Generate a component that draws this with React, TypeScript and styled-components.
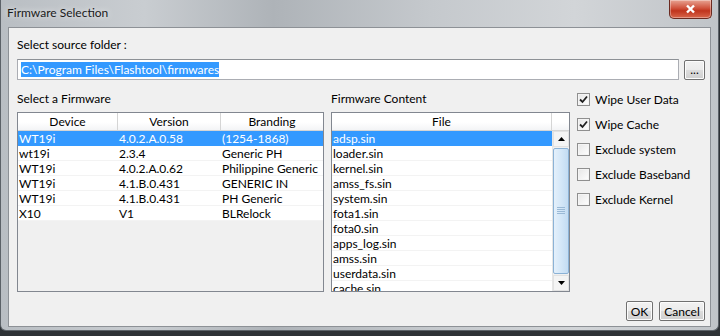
import React from 'react'
import styled, { createGlobalStyle } from 'styled-components'

const GlobalStyle = createGlobalStyle`
  html, body {
    margin: 0;
    padding: 0;
    background: #2e3236;
  }
  * {
    box-sizing: border-box;
  }
`

const Window = styled.div`
  width: 719px;
  height: 331px;
  display: flex;
  flex-flow: column nowrap;
  padding: 0 7px 3px 7px;
  border: 1px solid #5c6268;
  border-top: none;
  border-radius: 0 0 6px 6px;
  background: linear-gradient(90deg, #b9bec3 0%, #c9cdd1 20%, #aeb3b8 38%, #c5c9cd 60%, #d2d5d8 80%, #c0c4c8 100%);
  font-family: Lato, 'Noto Sans', sans-serif;
  font-size: 12px;
  color: #000;
`

const TitleBar = styled.div`
  height: 27px;
  display: flex;
  flex-flow: row nowrap;
  align-items: flex-start;
  justify-content: space-between;
`

const TitleText = styled.span`
  margin-top: 5px;
  margin-left: -1px;
  font-size: 12px;
  color: #1a1a1a;
  text-shadow: 0 0 6px rgba(255, 255, 255, 0.9);
`

const CloseButton = styled.div`
  width: 43px;
  height: 19px;
  margin-right: -1px;
  display: flex;
  align-items: center;
  justify-content: center;
  border: 1px solid #6b2a20;
  border-top: none;
  border-radius: 0 0 5px 5px;
  background: linear-gradient(180deg, #e8a493 0%, #d0533d 45%, #c0341d 60%, #d8664a 100%);
  box-shadow: inset 0 0 0 1px rgba(255, 255, 255, 0.35);
`

const Client = styled.div`
  flex: 1;
  display: flex;
  flex-flow: column nowrap;
  background: #f0f0f0;
  border: 1px solid #8d9196;
  padding: 9px 5px 4px 8px;
`

const Label = styled.div`
  height: 16px;
  line-height: 16px;
`

const PathRow = styled.div`
  display: flex;
  flex-flow: row nowrap;
  align-items: center;
  margin-top: 6px;
  gap: 5px;
`

const PathInput = styled.div`
  flex: 1;
  height: 21px;
  display: flex;
  align-items: center;
  padding-left: 3px;
  background: #fff;
  border: 1px solid #abadb3;
  border-top-color: #8d9196;
`

const Highlight = styled.span`
  background: #3399ff;
  color: #fff;
  line-height: 15px;
`

const Button = styled.div<{ $w: number }>`
  width: ${(p) => p.$w}px;
  height: 20px;
  display: flex;
  align-items: center;
  justify-content: center;
  border: 1px solid #707070;
  border-radius: 2px;
  background: linear-gradient(180deg, #f2f2f2 0%, #ebebeb 49%, #dddddd 50%, #cfcfcf 100%);
  box-shadow: inset 0 0 0 1px #fcfcfc;
`

const Sections = styled.div`
  display: flex;
  flex-flow: row nowrap;
  margin-top: 11px;
`

const Column = styled.div<{ $w: number; $gap?: number }>`
  width: ${(p) => p.$w}px;
  margin-right: ${(p) => p.$gap || 0}px;
  display: flex;
  flex-flow: column nowrap;
`

const Grid = styled.div`
  margin-top: 5px;
  height: 180px;
  border: 1px solid #828790;
  background: #f0f0f0;
  overflow: hidden;
  display: flex;
  flex-flow: column nowrap;
`

const HeaderRow = styled.div`
  display: flex;
  flex-flow: row nowrap;
  height: 18px;
  background: linear-gradient(180deg, #ffffff 0%, #ffffff 55%, #f3f4f6 100%);
  border-bottom: 1px solid #d5d5d5;
`

const HeaderCell = styled.div<{ $w?: number }>`
  ${(p) => (p.$w ? `width: ${p.$w}px;` : 'flex: 1;')}
  text-align: center;
  line-height: 17px;
  border-right: 1px solid #d5d5d5;
  &:last-child {
    border-right: none;
  }
`

const Row = styled.div<{ $selected?: boolean }>`
  display: flex;
  flex-flow: row nowrap;
  height: 15px;
  line-height: 15px;
  background: ${(p) => (p.$selected ? '#3399ff' : '#fff')};
  color: ${(p) => (p.$selected ? '#fff' : '#000')};
  box-shadow: inset 0 -1px 0 ${(p) => (p.$selected ? '#3399ff' : '#f3f3f3')};
`

const Cell = styled.div<{ $w?: number }>`
  ${(p) => (p.$w ? `width: ${p.$w}px;` : 'flex: 1;')}
  padding-left: 1px;
  white-space: nowrap;
`

const ListBody = styled.div`
  flex: 1;
  display: flex;
  flex-flow: row nowrap;
  overflow: hidden;
`

const ListRows = styled.div`
  flex: 1;
  background: #fff;
  overflow: hidden;
`

const ScrollBar = styled.div`
  width: 17px;
  display: flex;
  flex-flow: column nowrap;
  background: #f0f0f0;
  border-left: 1px solid #e6e6e6;
`

const ScrollArrow = styled.div`
  height: 16px;
  display: flex;
  align-items: center;
  justify-content: center;
  background: #f4f4f4;
  border: 1px solid #e2e2e2;
`

const Thumb = styled.div`
  flex: 1;
  margin: 1px 0;
  display: flex;
  align-items: center;
  justify-content: center;
  border: 1px solid #8bb2d6;
  border-radius: 2px;
  background: linear-gradient(90deg, #e4f0fb 0%, #d4e7f8 50%, #c3dcf3 100%);
`

const Grip = styled.div`
  width: 8px;
  height: 8px;
  background-image: repeating-linear-gradient(180deg, #9ab9d6 0 1px, transparent 1px 2px);
`

const Options = styled.div`
  display: flex;
  flex-flow: column nowrap;
  gap: 7px;
  margin-left: 1px;
  margin-top: -1px;
`

const OptionRow = styled.div`
  display: flex;
  flex-flow: row nowrap;
  align-items: center;
  height: 18px;
  gap: 5px;
`

const Box = styled.div`
  width: 13px;
  height: 13px;
  display: flex;
  align-items: center;
  justify-content: center;
  border: 1px solid #8f8f8f;
  background: linear-gradient(135deg, #e6e6e6 0%, #ffffff 100%);
  box-shadow: inset 0 0 0 1px #f4f4f4;
`

const Footer = styled.div`
  flex: 1;
  display: flex;
  flex-flow: row nowrap;
  justify-content: flex-end;
  align-items: flex-end;
  gap: 6px;
  padding-bottom: 1px;
`

const firmwares = [
  ['WT19i', '4.0.2.A.0.58', '(1254-1868)'],
  ['wt19i', '2.3.4', 'Generic PH'],
  ['WT19i', '4.0.2.A.0.62', 'Philippine Generic'],
  ['WT19i', '4.1.B.0.431', 'GENERIC IN'],
  ['WT19i', '4.1.B.0.431', 'PH Generic'],
  ['X10', 'V1', 'BLRelock'],
]

const files = [
  'adsp.sin',
  'loader.sin',
  'kernel.sin',
  'amss_fs.sin',
  'system.sin',
  'fota1.sin',
  'fota0.sin',
  'apps_log.sin',
  'amss.sin',
  'userdata.sin',
  'cache.sin',
]

const options = [
  { label: 'Wipe User Data', checked: true },
  { label: 'Wipe Cache', checked: true },
  { label: 'Exclude system', checked: false },
  { label: 'Exclude Baseband', checked: false },
  { label: 'Exclude Kernel', checked: false },
]

const Check = () => (
  <svg width="9" height="9" viewBox="0 0 9 9">
    <path d="M1 4.5 L3.5 7 L8 1.5" fill="none" stroke="#202020" strokeWidth="1.8" />
  </svg>
)

const App: React.FunctionComponent = () => {
  return (
    <>
      <GlobalStyle />
      <Window>
        <TitleBar>
          <TitleText>Firmware Selection</TitleText>
          <CloseButton>
            <svg width="11" height="10" viewBox="0 0 11 10">
              <path d="M2 1.5 L9 8.5 M9 1.5 L2 8.5" stroke="#fff" strokeWidth="2.4" />
            </svg>
          </CloseButton>
        </TitleBar>
        <Client>
          <Label>Select source folder :</Label>
          <PathRow>
            <PathInput>
              <Highlight>C:\Program Files\Flashtool\firmwares</Highlight>
            </PathInput>
            <Button $w={21}>...</Button>
          </PathRow>
          <Sections>
            <Column $w={307} $gap={7}>
              <Label>Select a Firmware</Label>
              <Grid>
                <HeaderRow>
                  <HeaderCell $w={100}>Device</HeaderCell>
                  <HeaderCell $w={103}>Version</HeaderCell>
                  <HeaderCell>Branding</HeaderCell>
                </HeaderRow>
                {firmwares.map((f, i) => (
                  <Row key={i} $selected={i === 0}>
                    <Cell $w={100}>{f[0]}</Cell>
                    <Cell $w={103}>{f[1]}</Cell>
                    <Cell>{f[2]}</Cell>
                  </Row>
                ))}
              </Grid>
            </Column>
            <Column $w={239} $gap={6}>
              <Label>Firmware Content</Label>
              <Grid>
                <HeaderRow>
                  <HeaderCell>File</HeaderCell>
                  <HeaderCell $w={17} />
                </HeaderRow>
                <ListBody>
                  <ListRows>
                    {files.map((f, i) => (
                      <Row key={f} $selected={i === 0}>
                        <Cell>{f}</Cell>
                      </Row>
                    ))}
                  </ListRows>
                  <ScrollBar>
                    <ScrollArrow>
                      <svg width="7" height="4" viewBox="0 0 7 4">
                        <path d="M0 4 L3.5 0 L7 4 Z" fill="#000" />
                      </svg>
                    </ScrollArrow>
                    <Thumb>
                      <Grip />
                    </Thumb>
                    <ScrollArrow>
                      <svg width="7" height="4" viewBox="0 0 7 4">
                        <path d="M0 0 L3.5 4 L7 0 Z" fill="#000" />
                      </svg>
                    </ScrollArrow>
                  </ScrollBar>
                </ListBody>
              </Grid>
            </Column>
            <Options>
              {options.map((o) => (
                <OptionRow key={o.label}>
                  <Box>{o.checked && <Check />}</Box>
                  <span>{o.label}</span>
                </OptionRow>
              ))}
            </Options>
          </Sections>
          <Footer>
            <Button $w={27}>OK</Button>
            <Button $w={46}>Cancel</Button>
          </Footer>
        </Client>
      </Window>
    </>
  )
}

export default App
